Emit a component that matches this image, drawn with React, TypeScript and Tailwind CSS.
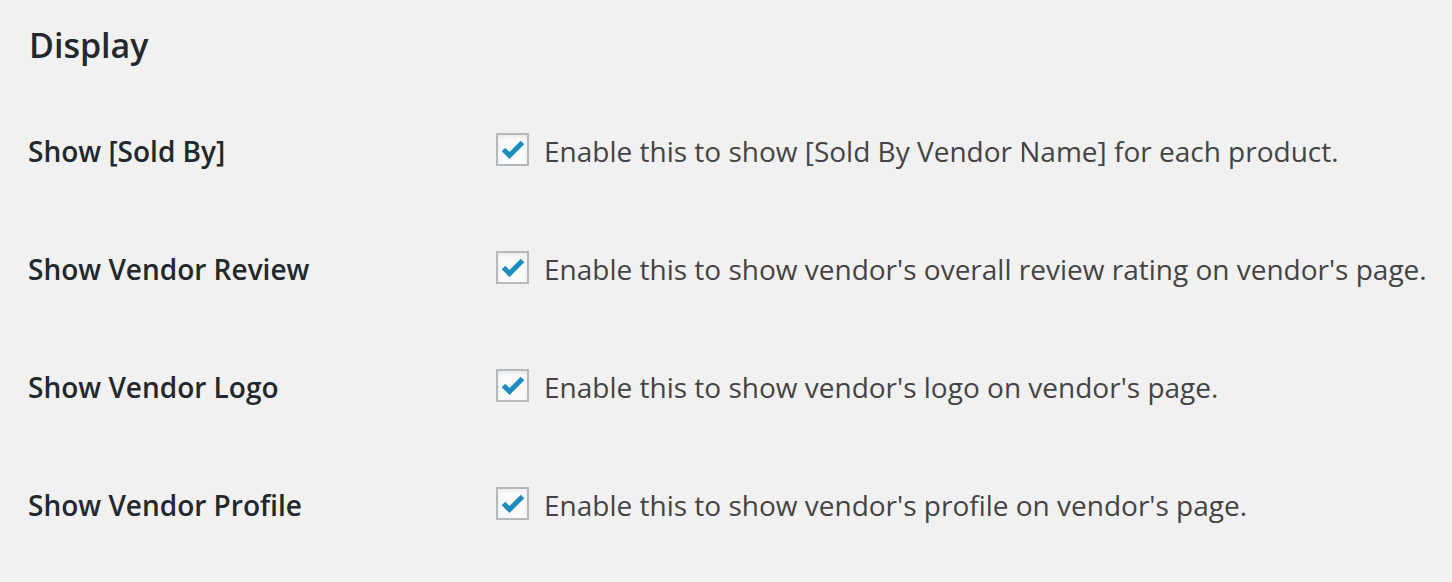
import React from "react";

const rows = [
  { label: "Show [Sold By]", desc: "Enable this to show [Sold By Vendor Name] for each product." },
  { label: "Show Vendor Review", desc: "Enable this to show vendor's overall review rating on vendor's page." },
  { label: "Show Vendor Logo", desc: "Enable this to show vendor's logo on vendor's page." },
  { label: "Show Vendor Profile", desc: "Enable this to show vendor's profile on vendor's page." },
];

function Check() {
  return (
    <span className="mt-[-4px] flex h-[33px] w-[33px] shrink-0 border-2 border-[#b4b9be] bg-[#fbfbfb] shadow-[inset_0_2px_4px_rgba(0,0,0,0.08)]">
      <svg width="29" height="29" viewBox="0 0 29 29">
        <path d="M5.5 14.5 L11.5 20.5 L24.5 7.5" fill="none" stroke="#1e8cbe" strokeWidth="5" strokeLinejoin="miter" />
      </svg>
    </span>
  );
}

export default function App() {
  return (
    <div className="min-h-[582px] w-full bg-[#f1f1f1] pl-[28px] pt-[22px] text-[#23282d]" style={{ fontFamily: '"Open Sans", "Noto Sans", sans-serif' }}>
      <h2 className="pl-[1px] text-[34px] font-semibold leading-[46px]">Display</h2>
      <div className="mt-[48px] flex flex-col">
        {rows.map((r) => (
          <div key={r.label} className="flex h-[118px] items-center pb-[48px]">
            <div className="w-[468px] shrink-0 text-[28px] font-semibold leading-[40px]">{r.label}</div>
            <label className="flex items-center gap-[15px] text-[28px] leading-[40px] text-[#444]">
              <Check />
              <span>{r.desc}</span>
            </label>
          </div>
        ))}
      </div>
    </div>
  );
}
